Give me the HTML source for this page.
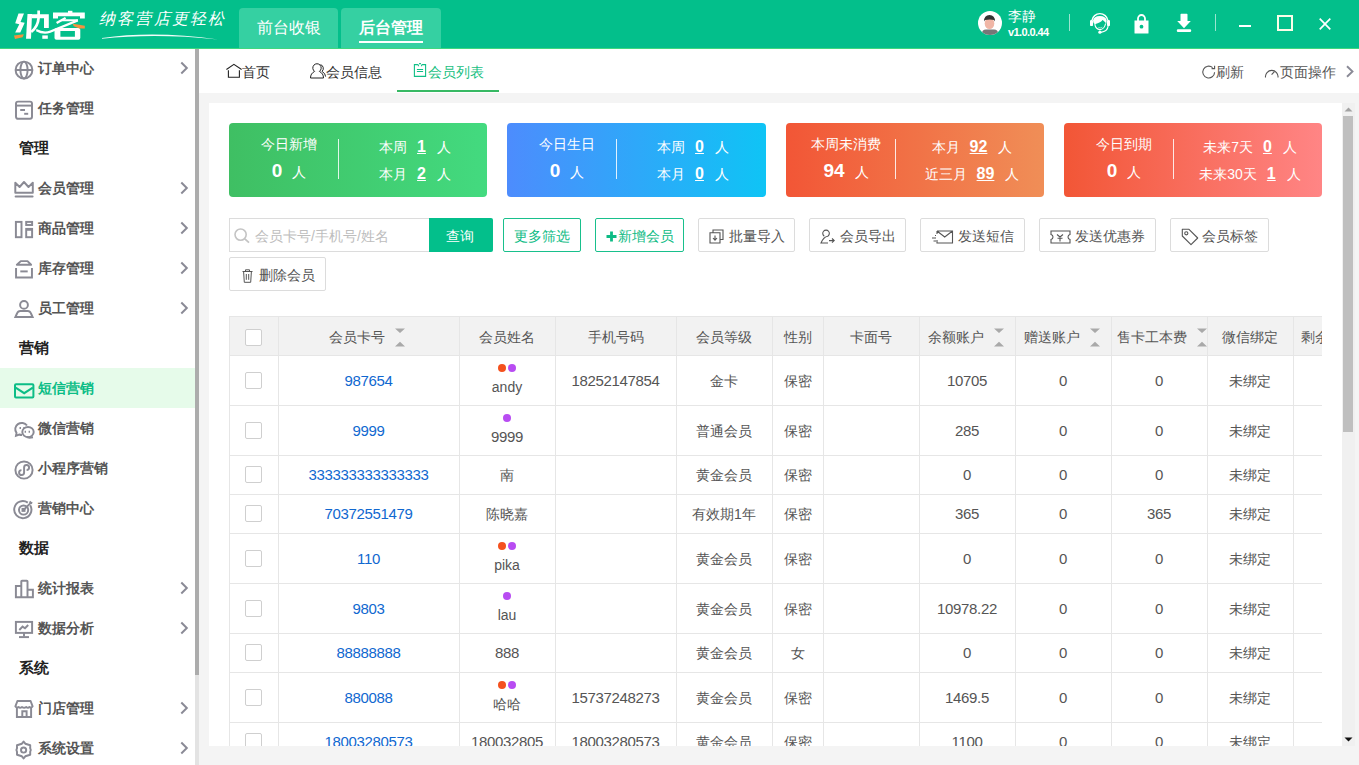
<!DOCTYPE html>
<html><head><meta charset="utf-8">
<style>
*{margin:0;padding:0;box-sizing:border-box}
html,body{width:1359px;height:765px;overflow:hidden;background:#f4f4f4;font-family:"Liberation Sans",sans-serif;}
.a{position:absolute;white-space:nowrap}
svg{position:absolute;overflow:visible}
#hdr{position:absolute;left:0;top:0;width:1359px;height:49px;background:#03bf8b;border-bottom:1px solid #3fd77f}
#hdr .tab{position:absolute;top:8px;height:40px;background:#35d0a2;border-radius:4px 4px 0 0;color:#fff;font-size:16px;text-align:center;line-height:40px}
#side{position:absolute;left:0;top:49px;width:195px;height:716px;background:#fff}
.si{position:absolute;left:0;width:195px;height:40px;color:#555;font-size:14px;font-weight:500}
.si .t{position:absolute;left:38px;top:0;line-height:40px}
.sh{position:absolute;left:19px;color:#222;font-size:15px;font-weight:bold;line-height:40px}
.ic path,.ic circle,.ic rect,.ic ellipse,.ic polyline,.ic line{fill:none;stroke:#8a8a94;stroke-width:1.95}
#main{position:absolute;left:199px;top:49px;width:1160px;height:716px;background:#f4f4f4}
#tabsbar{position:absolute;left:0;top:0;width:1160px;height:44px;background:#fff}
.card{border-radius:4px;color:#fff}
.card .cl{position:absolute;left:0;top:11px;width:120px;text-align:center;font-size:14px;line-height:20px}
.card .cb{position:absolute;left:0;top:36px;width:120px;height:24px;display:flex;justify-content:center;align-items:baseline}
.card .cb b{font-size:19px;line-height:24px;font-weight:bold}
.card .cb span{font-size:14px;line-height:24px;margin-left:10px}
.card .cd{position:absolute;left:109px;top:16px;width:1px;height:40px;background:rgba(255,255,255,.85)}
.card .cr{position:absolute;left:110px;width:152px;height:20px;display:flex;justify-content:center;align-items:baseline;font-size:14px;line-height:20px}
.card .cr u{font-weight:bold;font-size:16px;margin:0 11px 0 10px;text-decoration-thickness:1px;text-underline-offset:1px}
.btn{position:absolute;top:218px;height:34px;border:1px solid #dcdcdc;border-radius:2px;background:#fff;color:#555;font-size:14px;line-height:35px;text-align:center}
.btn.g{border-color:#18c08c;color:#0dbb84}
.th{height:22px;display:flex;justify-content:safe center;align-items:center;box-sizing:border-box;font-size:14px;line-height:22px;color:#555}
.th .srt{position:absolute}
.td{height:22px;text-align:center;font-size:14px;line-height:22px;color:#555}
.td.blue{color:#1068d0}
.td.num{font-size:15px;letter-spacing:-0.35px}
.dots{height:8px;display:flex;justify-content:center;gap:2px}
.dots i{display:block;width:8px;height:8px;border-radius:50%}
</style></head><body>
<!-- HEADER -->
<div id="hdr">
  <svg style="left:0;top:0" width="90" height="48" viewBox="0 0 90 48"><g fill="#fff">
<path d="M18.5 13.5 H24 L20.5 22 L24.7 22.8 L20.3 32.6 H15.2 L19.3 24.3 L15.2 23.3 Z"/>
<path d="M27.5 14 H32 L31 38.8 H26 Z"/>
<path d="M31.5 14.2 H48.8 V28 H44 V18.2 H31.5 Z"/>
<path d="M37.3 10.5 H40 V17.5 Q39.5 27 32 33 L30.5 31 Q36.5 26 37.3 17.5 Z"/>
<path d="M42.3 35.4 H47.8 V38.8 H42.3 Z"/>
<path d="M68 10.8 H72.4 V13.5 H68 Z"/>
<path d="M53 12.5 H84.8 V18.4 H80 V16.2 H58 V18.4 H53 Z"/>
<path d="M56 22 L65 17 L66.2 18.8 L57.2 24 Z"/>
<path d="M61.4 19.3 H78 L77.5 21.3 H60 Z"/>
<path d="M36.5 29 Q44 33 50 30.5 L77.5 19.3 L78.2 21.6 L50.5 32.8 Q43.5 35.5 36 31.2 Z"/>
<path fill-rule="evenodd" d="M56.5 27.9 H78.5 Q80.3 27.9 80.3 29.7 V38 Q80.3 39.8 78.5 39.8 H56.5 Q54.5 39.8 54.5 38 V29.7 Q54.5 27.9 56.5 27.9 Z M60.4 30.9 V36.8 H74.9 V30.9 Z"/>
</g>
<path d="M14 35.6 L23.8 34.3 L22.6 37.2 L15 38.9 Z" fill="#f5923e"/>
<path d="M72.6 23.8 L77.5 24.6 L84.8 25.8 L84.8 28.4 L79.5 28.4 L73.8 26.2 Z" fill="#f5923e"/>
</svg>
  <div class="a" style="left:99px;top:8px;font-size:16px;color:#fff;line-height:22px;letter-spacing:2.2px;font-weight:300;font-family:'Liberation Serif',serif;font-style:italic">纳客营店更轻松</div>
<svg style="left:100px;top:30px" width="120" height="12" viewBox="0 0 120 12"><path d="M2 8 Q55 0.5 118 9.5 Q55 3 2 8.8 Z" fill="#fff" opacity=".95"/></svg>
  <div class="tab" style="left:239px;width:99px;font-weight:500">前台收银</div>
  <div class="tab" style="left:341px;width:100px;font-weight:bold">后台管理<div style="position:absolute;left:18px;top:33px;width:64px;height:2px;background:#fff"></div></div>
  <!-- avatar -->
  <svg style="left:978px;top:11px" width="24" height="24" viewBox="0 0 24 24">
    <defs><clipPath id="cav"><circle cx="12" cy="12" r="12"/></clipPath></defs>
    <circle cx="12" cy="12" r="12" fill="#fff"/>
    <g clip-path="url(#cav)">
      <rect x="4" y="18.5" width="16" height="8" rx="4" fill="#777"/>
      <ellipse cx="11.5" cy="12.5" rx="4.8" ry="5.5" fill="#f0b6a6"/>
      <path d="M6 10.5 Q6 4 11.5 4 Q17 4 17 10.5 L16 9 Q12 8 7 9 Z" fill="#333"/>
    </g>
  </svg>
  <div class="a" style="left:1008px;top:7px;font-size:14px;color:#fff;line-height:18px">李静</div>
  <div class="a" style="left:1008px;top:25px;font-size:11px;font-weight:bold;color:#fff;line-height:14px;letter-spacing:-0.6px">v1.0.0.44</div>
  <div class="a" style="left:1069px;top:14px;width:1px;height:17px;background:rgba(255,255,255,.6)"></div>
  <!-- headset -->
  <svg style="left:1088px;top:10px" width="24" height="26" viewBox="0 0 24 26">
    <path d="M3.9 10.5 A8.1 8.1 0 0 1 19.9 10.5" fill="none" stroke="#fff" stroke-width="1.4"/>
    <rect x="2" y="9.9" width="3" height="6.2" rx="1.2" fill="#fff"/>
    <rect x="19" y="9.9" width="3" height="6.2" rx="1.2" fill="#fff"/>
    <path d="M5 10.5 Q5.8 6 11.9 6 Q17.8 6.2 18.7 10.5 L18.3 13.8 Q17 11.8 15.3 10.6 L14.4 10 Q13.2 12.5 6.8 14.2 Q5 12.8 5 10.5 Z" fill="#fff"/>
    <path d="M6.8 14.2 Q7.6 19.4 11.9 19.6 Q16.4 19.4 17.6 13.5" fill="none" stroke="#fff" stroke-width="1.1"/>
    <path d="M10.3 17.4 Q12.3 18.4 14.4 17.2" fill="none" stroke="#fff" stroke-width=".8" opacity=".7"/>
    <path d="M20.2 15.8 Q19.6 21.6 12.8 22.3" fill="none" stroke="#fff" stroke-width="1.2"/>
    <circle cx="11.9" cy="22.2" r="1.6" fill="#fff"/>
  </svg>
  <!-- lock -->
  <svg style="left:1134px;top:13px" width="15" height="21" viewBox="0 0 15 21">
    <path d="M4 8 V5.5 A3.5 3.5 0 0 1 11 5.5 V8" fill="none" stroke="#fff" stroke-width="1.8"/>
    <path fill="#fff" fill-rule="evenodd" d="M0.5 7.5 H14.5 V20 Q14.5 20.5 14 20.5 H1 Q0.5 20.5 0.5 20 Z M7.5 11.8 A1.9 1.9 0 1 0 7.5 15.6 A1.9 1.9 0 1 0 7.5 11.8 Z"/>
  </svg>
  <!-- download -->
  <svg style="left:1176px;top:13px" width="16" height="20" viewBox="0 0 16 20">
    <path fill="#fff" d="M4.5 1.5 Q4.5 0.8 5.2 0.8 H10.8 Q11.5 0.8 11.5 1.5 V8 H14.8 L8 15.2 L1.2 8 H4.5 Z"/>
    <rect x="0.8" y="16.3" width="14.4" height="2.6" rx="1.2" fill="#fff"/>
  </svg>
  <div class="a" style="left:1215px;top:14px;width:1px;height:17px;background:rgba(255,255,255,.6)"></div>
  <div class="a" style="left:1239px;top:25px;width:12px;height:2px;background:#fff"></div>
  <div class="a" style="left:1277px;top:15px;width:16px;height:16px;border:2px solid #fbfde8"></div>
  <svg style="left:1319px;top:18px" width="12" height="12" viewBox="0 0 12 12"><path d="M0.7 0.7 L11.3 11.3 M11.3 0.7 L0.7 11.3" stroke="#fff" stroke-width="1.7"/></svg>
</div>

<!-- SIDEBAR -->
<div id="side"></div>
<div class="a" style="left:38px;top:48px;line-height:40px;font-size:14px;color:#555;font-weight:bold">订单中心</div>
<svg class="ic" style="left:14px;top:59.5px" width="20" height="20" viewBox="0 0 20 20"><circle cx="10" cy="10" r="8.4"/><path d="M1.8 10 H18.2"/><ellipse cx="10" cy="10" rx="3.6" ry="8.4"/></svg>
<svg style="left:179px;top:61px" width="10" height="14" viewBox="0 0 10 14"><path d="M2.3 1.5 L7.8 7 L2.3 12.5" fill="none" stroke="#8a8a96" stroke-width="2"/></svg>
<div class="a" style="left:38px;top:88px;line-height:40px;font-size:14px;color:#555;font-weight:bold">任务管理</div>
<svg class="ic" style="left:14px;top:99.5px" width="20" height="20" viewBox="0 0 20 20"><rect x="2" y="1.6" width="16" height="17.2" rx="2"/><path d="M2 5.6 H18"/><path d="M6.2 10 H11" stroke-width="2.4"/><path d="M10.2 13.8 H14.2" stroke-width="2.4"/></svg>
<div class="sh a" style="top:128px">管理</div>
<div class="a" style="left:38px;top:168px;line-height:40px;font-size:14px;color:#555;font-weight:bold">会员管理</div>
<svg class="ic" style="left:14px;top:178px" width="20" height="20" viewBox="0 0 20 20"><path d="M1.3 4.8 L5.6 9 L10 4 L14.5 9 L18.8 4.8 V14.8 H1.3 Z" stroke-linejoin="round"/><path d="M1.6 18.4 H18.6" stroke-width="2.2" stroke-linecap="round"/></svg>
<svg style="left:179px;top:181px" width="10" height="14" viewBox="0 0 10 14"><path d="M2.3 1.5 L7.8 7 L2.3 12.5" fill="none" stroke="#8a8a96" stroke-width="2"/></svg>
<div class="a" style="left:38px;top:208px;line-height:40px;font-size:14px;color:#555;font-weight:bold">商品管理</div>
<svg class="ic" style="left:14px;top:218px" width="20" height="20" viewBox="0 0 20 20"><rect x="1.9" y="3.9" width="5.6" height="15.3"/><rect x="12.2" y="3.9" width="5.9" height="3.1"/><rect x="12.2" y="10.9" width="5.9" height="8.3"/><path d="M12.2 11.8 H18.1"/></svg>
<svg style="left:179px;top:221px" width="10" height="14" viewBox="0 0 10 14"><path d="M2.3 1.5 L7.8 7 L2.3 12.5" fill="none" stroke="#8a8a96" stroke-width="2"/></svg>
<div class="a" style="left:38px;top:248px;line-height:40px;font-size:14px;color:#555;font-weight:bold">库存管理</div>
<svg class="ic" style="left:14px;top:258px" width="20" height="20" viewBox="0 0 20 20"><path d="M6.8 3.1 H13.5 L17.1 6.8 H2.9 Z" stroke-width="2.3" stroke-linejoin="round"/><path d="M2.05 10.1 V19.5 H17.95 V10.1" stroke-width="1.9"/><path d="M6.3 13.4 H13.7" stroke-width="2.6"/></svg>
<svg style="left:179px;top:261px" width="10" height="14" viewBox="0 0 10 14"><path d="M2.3 1.5 L7.8 7 L2.3 12.5" fill="none" stroke="#8a8a96" stroke-width="2"/></svg>
<div class="a" style="left:38px;top:288px;line-height:40px;font-size:14px;color:#555;font-weight:bold">员工管理</div>
<svg class="ic" style="left:14px;top:298px" width="20" height="20" viewBox="0 0 20 20"><circle cx="10" cy="6.9" r="3.9"/><path d="M6.3 13 H13.8 Q16 13 17 15.5 L18.6 19 H1.4 L3 15.5 Q4 13 6.3 13 Z"/></svg>
<svg style="left:179px;top:301px" width="10" height="14" viewBox="0 0 10 14"><path d="M2.3 1.5 L7.8 7 L2.3 12.5" fill="none" stroke="#8a8a96" stroke-width="2"/></svg>
<div class="sh a" style="top:328px">营销</div>
<div class="a" style="left:0;top:368px;width:195px;height:40px;background:#e6fbea"></div>
<div class="a" style="left:38px;top:368px;line-height:40px;font-size:14px;color:#0cbd86;font-weight:bold">短信营销</div>
<svg class="ic" style="left:14px;top:379.5px" width="20" height="20" viewBox="0 0 20 20"><rect style="stroke:#0cbd86;stroke-width:2" x="1" y="4.3" width="18.4" height="13.1" rx="1"/><path style="stroke:#0cbd86;stroke-width:2" d="M1.6 7.6 L10.2 13.2 L18.8 7.6"/></svg>
<div class="a" style="left:38px;top:408px;line-height:40px;font-size:14px;color:#555;font-weight:bold">微信营销</div>
<svg class="ic" style="left:14px;top:419.5px" width="20" height="20" viewBox="0 0 20 20"><path d="M13 5.5 A6.3 6 0 1 0 2.5 12.8 L2 15.8 L5.2 14.5 Q6.5 15 8 15" stroke-width="1.5"/><ellipse cx="14" cy="12" rx="5.7" ry="5.1" stroke-width="1.5"/><path d="M12.6 17 L15.5 17.7 L19 17.2" stroke-width="1.5"/><path d="M5.5 7.9 H7 M9.3 7.9 H10.8 M10.6 11.8 H12 M14.6 11.8 H16" stroke-width="1.3"/></svg>
<div class="a" style="left:38px;top:448px;line-height:40px;font-size:14px;color:#555;font-weight:bold">小程序营销</div>
<svg class="ic" style="left:14px;top:459.5px" width="20" height="20" viewBox="0 0 20 20"><circle cx="10" cy="10" r="8.6"/><path d="M12.6 10 A2.5 2.5 0 1 0 10.1 7.4 V12.6 A2.5 2.5 0 1 1 7.5 10.1"/></svg>
<div class="a" style="left:38px;top:488px;line-height:40px;font-size:14px;color:#555;font-weight:bold">营销中心</div>
<svg class="ic" style="left:14px;top:499.5px" width="20" height="20" viewBox="0 0 20 20"><path d="M16.2 5.2 A8.6 8.6 0 1 1 13.8 2.6"/><circle cx="9.6" cy="10" r="4.6"/><path d="M9.6 10 L17 2.6 M15.5 1.6 L16.9 2.6 L18.2 3.3" stroke-width="1.8"/><rect x="8.5" y="8.9" width="2" height="2" fill="#8a8a94" stroke="none"/></svg>
<div class="sh a" style="top:528px">数据</div>
<div class="a" style="left:38px;top:568px;line-height:40px;font-size:14px;color:#555;font-weight:bold">统计报表</div>
<svg class="ic" style="left:14px;top:578px" width="20" height="20" viewBox="0 0 20 20"><path d="M1.9 19.2 V8 H7.3 V19.2 Z M7.3 19.2 V3.3 Q7.3 2.7 8 2.7 H12.8 Q13.5 2.7 13.5 3.3 V19.2 M13.5 11.8 H18.9 V19.2 H1.9"/></svg>
<svg style="left:179px;top:581px" width="10" height="14" viewBox="0 0 10 14"><path d="M2.3 1.5 L7.8 7 L2.3 12.5" fill="none" stroke="#8a8a96" stroke-width="2"/></svg>
<div class="a" style="left:38px;top:608px;line-height:40px;font-size:14px;color:#555;font-weight:bold">数据分析</div>
<svg class="ic" style="left:14px;top:618px" width="20" height="20" viewBox="0 0 20 20"><rect x="1.9" y="3.9" width="16.2" height="11"/><path d="M10 15 V18.5"/><path d="M5 19.1 H15"/><path d="M5.3 12 L8.6 8.6 L11 10.2 L14.2 7" stroke-width="1.6"/></svg>
<svg style="left:179px;top:621px" width="10" height="14" viewBox="0 0 10 14"><path d="M2.3 1.5 L7.8 7 L2.3 12.5" fill="none" stroke="#8a8a96" stroke-width="2"/></svg>
<div class="sh a" style="top:648px">系统</div>
<div class="a" style="left:38px;top:688px;line-height:40px;font-size:14px;color:#555;font-weight:bold">门店管理</div>
<svg class="ic" style="left:14px;top:698px" width="20" height="20" viewBox="0 0 20 20"><path d="M3.4 3 H16.6 L18.6 8.3 Q17.6 10.2 15.6 9 Q14 10.6 12.2 9 Q10.1 10.6 8 9 Q6 10.6 4.4 9 Q2.4 10.2 1.4 8.3 Z" stroke-linejoin="round"/><path d="M2.9 10 V19 H17.1 V10"/><path d="M8.3 19 V13.2 H12.6 V19"/></svg>
<svg style="left:179px;top:701px" width="10" height="14" viewBox="0 0 10 14"><path d="M2.3 1.5 L7.8 7 L2.3 12.5" fill="none" stroke="#8a8a96" stroke-width="2"/></svg>
<div class="a" style="left:38px;top:728px;line-height:40px;font-size:14px;color:#555;font-weight:bold">系统设置</div>
<svg class="ic" style="left:14px;top:740px" width="20" height="20" viewBox="0 0 20 20"><path d="M9.6 1.6 L11.3 3.7 L16.2 5.3 L16.2 8.3 L16.8 10 L16.2 11.7 L16.2 14.7 L11.3 16.3 L9.6 18.4 L7.9 16.3 L3 14.7 L3 11.7 L2.4 10 L3 8.3 L3 5.3 L7.9 3.7 Z" stroke-linejoin="round"/><circle cx="9.6" cy="10" r="2.6"/></svg>
<svg style="left:179px;top:741px" width="10" height="14" viewBox="0 0 10 14"><path d="M2.3 1.5 L7.8 7 L2.3 12.5" fill="none" stroke="#8a8a96" stroke-width="2"/></svg>

<div class="a" style="left:195px;top:49px;width:4px;height:716px;background:#e3e3e3"></div>
<div class="a" style="left:195px;top:49px;width:4px;height:626px;background:#acacac"></div>

<!-- MAIN -->
<div id="main">
  <div id="tabsbar"></div>
</div>
<!-- TABS BAR -->
<svg style="left:226px;top:64px" width="16" height="14" viewBox="0 0 16 14"><path d="M0.4 5.5 L7.9 0.3 L15.6 5.5 M2.4 6.2 V13.3 H13.4 V6.2" fill="none" stroke="#222" stroke-width="1.1"/></svg>
<div class="a" style="left:242px;top:61.5px;font-size:14px;line-height:20px;color:#333">首页</div>
<svg style="left:310px;top:63px" width="16" height="16" viewBox="0 0 16 16"><path d="M4.6 8.4 A4.2 4.2 0 1 1 9.4 8.4 M4.6 8.4 Q0.5 10.5 0.5 15 H13.5 Q13.5 10.5 9.4 8.4 M10.5 1.6 A4 4 0 0 1 12 8.4 Q15.5 10.3 15.6 13.6" fill="none" stroke="#222" stroke-width="1"/></svg>
<div class="a" style="left:326px;top:61.5px;font-size:14px;line-height:20px;color:#333">会员信息</div>
<svg style="left:413px;top:63px" width="14" height="14" viewBox="0 0 14 14"><path d="M4.6 1.6 H1.4 V13.4 H12.6 V1.6 H9.4 M4.6 1.6 Q5.4 1.6 5.6 3.2 M9.4 1.6 Q8.6 1.6 8.4 3.2 M6.1 0.6 H7.9" fill="none" stroke="#0fbf86" stroke-width="1.1"/><path d="M3.9 6.5 H10.1 M3.9 8.5 H10.1" stroke="#0fbf86" stroke-width="1.1"/></svg>
<div class="a" style="left:428px;top:61.5px;font-size:14px;line-height:20px;color:#19bf82">会员列表</div>
<div class="a" style="left:397px;top:90px;width:102px;height:2px;background:#37b964"></div>
<svg style="left:1202px;top:65px" width="14" height="14" viewBox="0 0 14 14"><path d="M12.6 7.2 A5.9 5.9 0 1 1 10.6 2.6" fill="none" stroke="#555" stroke-width="1.1"/><path d="M12.6 0.8 V3.6 H9.6" fill="none" stroke="#555" stroke-width="1.1"/></svg>
<div class="a" style="left:1216px;top:62px;font-size:14px;line-height:20px;color:#555">刷新</div>
<svg style="left:1264px;top:65px" width="16" height="14" viewBox="0 0 16 14"><path d="M1.5 12.5 A6.3 6.3 0 1 1 14 12.5" fill="none" stroke="#555" stroke-width="1.1"/><path d="M7.6 9.6 L10.4 6.6" stroke="#555" stroke-width="1.1"/></svg>
<div class="a" style="left:1279.5px;top:62px;font-size:14px;line-height:20px;color:#555">页面操作</div>
<svg style="left:1345px;top:65px" width="10" height="13" viewBox="0 0 10 13"><path d="M2 1.2 L7.5 6.5 L2 11.8" fill="none" stroke="#8a8a96" stroke-width="1.9"/></svg>
<div id="card" class="a" style="left:209px;top:103px;width:1133px;height:643px;background:#fff;overflow:hidden"></div>
<!-- CARDS -->
<div class="a card" style="left:229px;top:123px;width:258px;height:74px;background:linear-gradient(90deg,#3fbf63,#43da7f)">
<div class="cl">今日新增</div>
<div class="cb"><b>0</b><span>人</span></div>
<div class="cd"></div>
<div class="cr" style="top:14px"><span>本周</span><u>1</u><span>人</span></div>
<div class="cr" style="top:40.5px"><span>本月</span><u>2</u><span>人</span></div>
</div>
<div class="a card" style="left:507px;top:123px;width:259px;height:74px;background:linear-gradient(90deg,#4d8cfd,#0fc4f5)">
<div class="cl">今日生日</div>
<div class="cb"><b>0</b><span>人</span></div>
<div class="cd"></div>
<div class="cr" style="top:14px"><span>本周</span><u>0</u><span>人</span></div>
<div class="cr" style="top:40.5px"><span>本月</span><u>0</u><span>人</span></div>
</div>
<div class="a card" style="left:786px;top:123px;width:258px;height:74px;background:linear-gradient(90deg,#f25636,#f08e57)">
<div class="cl">本周未消费</div>
<div class="cb"><b>94</b><span>人</span></div>
<div class="cd"></div>
<div class="cr" style="top:14px"><span>本月</span><u>92</u><span>人</span></div>
<div class="cr" style="top:40.5px"><span>近三月</span><u>89</u><span>人</span></div>
</div>
<div class="a card" style="left:1064px;top:123px;width:258px;height:74px;background:linear-gradient(90deg,#f25636,#ff8585)">
<div class="cl">今日到期</div>
<div class="cb"><b>0</b><span>人</span></div>
<div class="cd"></div>
<div class="cr" style="top:14px"><span>未来7天</span><u>0</u><span>人</span></div>
<div class="cr" style="top:40.5px"><span>未来30天</span><u>1</u><span>人</span></div>
</div>
<!-- TOOLBAR -->
<div class="a" style="left:229px;top:218px;width:201px;height:34px;border:1px solid #dcdcdc;border-right:none;background:#fff"></div>
<svg style="left:234px;top:228px" width="16" height="15" viewBox="0 0 16 15"><circle cx="6.6" cy="6.6" r="5.6" fill="none" stroke="#c4c4c4" stroke-width="1.6"/><path d="M10.8 10.8 L15 14.6" stroke="#c4c4c4" stroke-width="1.8"/></svg>
<div class="a" style="left:255px;top:225.5px;font-size:14px;line-height:20px;color:#bdbdbd">会员卡号/手机号/姓名</div>
<div class="a" style="left:429px;top:218px;width:64px;height:34px;background:#03bf8b;border-radius:0 2px 2px 0"></div>
<div class="a" style="left:446px;top:225.5px;font-size:14px;line-height:20px;color:#fff">查询</div>
<div class="btn g" style="left:503px;width:78px">更多筛选</div>
<div class="btn g" style="left:595px;width:89px"><svg style="left:10px;top:11.5px" width="11" height="11" viewBox="0 0 11 11"><path d="M5.5 0.5 V10.5 M0.5 5.5 H10.5" stroke="#0dbb84" stroke-width="2.8"/></svg><span style="position:absolute;left:21.5px">新增会员</span></div>
<div class="btn" style="left:698px;width:97px;padding-left:12px"><svg style="left:10px;top:10px" width="15" height="15" viewBox="0 0 15 15"><path d="M4 3.5 V1 H14 V10.5 H11.5 M1 3.8 H11 V14 H1 Z M6 6.5 V11 M4 9 L6 11.2 L8 9" fill="none" stroke="#555" stroke-width="1.1"/></svg><span style="position:absolute;left:30px">批量导入</span></div>
<div class="btn" style="left:809px;width:97px"><svg style="left:10px;top:10px" width="15" height="15" viewBox="0 0 15 15"><path d="M4.3 7.2 A3.3 3.3 0 1 1 7.8 7.2 Q3.5 7.8 1 14 H8 M9 11.6 H14 M12 9.5 L14.2 11.6 L12 13.7" fill="none" stroke="#555" stroke-width="1.1"/></svg><span style="position:absolute;left:30px">会员导出</span></div>
<div class="btn" style="left:920px;width:105px"><svg style="left:10px;top:11px" width="23" height="14" viewBox="0 0 23 14"><path d="M6 1 H21.5 V13 H6 V10 M6 1 L13.7 7 L21.5 1 M6 1 V4 M1 8 H5 M2.5 11 H5 M4 5.5 H5" fill="none" stroke="#555" stroke-width="1.1"/></svg><span style="position:absolute;left:37px">发送短信</span></div>
<div class="btn" style="left:1039px;width:117px"><svg style="left:10px;top:11px" width="21" height="14" viewBox="0 0 21 14"><path d="M1 1 H20 V4.5 Q18 5 18 7 Q18 9 20 9.5 V13 H1 V9.5 Q3 9 3 7 Q3 5 1 4.5 Z M7 4.5 L10 7 L13 4.5 M10 7 V11.5 M7.5 8.2 H12.5" fill="none" stroke="#555" stroke-width="1.1"/></svg><span style="position:absolute;left:35px">发送优惠券</span></div>
<div class="btn" style="left:1170px;width:99px"><svg style="left:10px;top:9px" width="18" height="18" viewBox="0 0 18 18"><path d="M1.3 1.3 H8 L16.7 10 L10 16.7 L1.3 8 Z" fill="none" stroke="#555" stroke-width="1.1" stroke-linejoin="round"/><circle cx="5.3" cy="5.3" r="1.6" fill="none" stroke="#555" stroke-width="1.1"/></svg><span style="position:absolute;left:31px">会员标签</span></div>
<div class="btn" style="left:229px;top:257px;width:97px;height:34px"><svg style="left:12px;top:11px" width="11" height="14" viewBox="0 0 11 14"><path d="M0.5 2.5 H10.5 M3.5 2.5 V0.8 H7.5 V2.5 M1.6 2.5 L2.3 13.3 H8.7 L9.4 2.5 M4.3 5 V10.8 M6.7 5 V10.8" fill="none" stroke="#555" stroke-width="1"/></svg><span style="position:absolute;left:29px">删除会员</span></div>

<div class="a" style="left:229px;top:316px;width:1093px;height:430px;overflow:hidden">
<div class="a" style="left:0;top:0;width:1100px;height:39px;background:#f2f2f2"></div>
<div class="a" style="left:0;top:0px;width:1100px;height:1px;background:#e6e6e6"></div>
<div class="a" style="left:0;top:39px;width:1100px;height:1px;background:#e6e6e6"></div>
<div class="a" style="left:0;top:89px;width:1100px;height:1px;background:#e6e6e6"></div>
<div class="a" style="left:0;top:139px;width:1100px;height:1px;background:#e6e6e6"></div>
<div class="a" style="left:0;top:178px;width:1100px;height:1px;background:#e6e6e6"></div>
<div class="a" style="left:0;top:217px;width:1100px;height:1px;background:#e6e6e6"></div>
<div class="a" style="left:0;top:267px;width:1100px;height:1px;background:#e6e6e6"></div>
<div class="a" style="left:0;top:317px;width:1100px;height:1px;background:#e6e6e6"></div>
<div class="a" style="left:0;top:356px;width:1100px;height:1px;background:#e6e6e6"></div>
<div class="a" style="left:0;top:406px;width:1100px;height:1px;background:#e6e6e6"></div>
<div class="a" style="left:0;top:445px;width:1100px;height:1px;background:#e6e6e6"></div>
<div class="a" style="left:0px;top:0;width:1px;height:500px;background:#e6e6e6"></div>
<div class="a" style="left:49px;top:0;width:1px;height:500px;background:#e6e6e6"></div>
<div class="a" style="left:230px;top:0;width:1px;height:500px;background:#e6e6e6"></div>
<div class="a" style="left:326px;top:0;width:1px;height:500px;background:#e6e6e6"></div>
<div class="a" style="left:447px;top:0;width:1px;height:500px;background:#e6e6e6"></div>
<div class="a" style="left:543px;top:0;width:1px;height:500px;background:#e6e6e6"></div>
<div class="a" style="left:594px;top:0;width:1px;height:500px;background:#e6e6e6"></div>
<div class="a" style="left:690px;top:0;width:1px;height:500px;background:#e6e6e6"></div>
<div class="a" style="left:786px;top:0;width:1px;height:500px;background:#e6e6e6"></div>
<div class="a" style="left:882px;top:0;width:1px;height:500px;background:#e6e6e6"></div>
<div class="a" style="left:978px;top:0;width:1px;height:500px;background:#e6e6e6"></div>
<div class="a" style="left:1064px;top:0;width:1px;height:500px;background:#e6e6e6"></div>
<div class="a" style="left:1135px;top:0;width:1px;height:500px;background:#e6e6e6"></div>
<div class="a" style="left:1231px;top:0;width:1px;height:500px;background:#e6e6e6"></div>
<div class="a" style="left:16px;top:12.5px;width:17px;height:17px;border:1px solid #cfcfcf;border-radius:2px;background:#fff"></div>
<div class="a th" style="left:49px;width:181px;top:10px;padding:0 29px 0 6px"><span style="position:relative">会员卡号<svg class="srt" style="left:calc(100% + 10px);top:2px" width="10" height="19" viewBox="0 0 10 19"><path d="M0 0.5 H10 L5 5 Z M0 18.5 H10 L5 13.8 Z" fill="#a9a9a9"/></svg></span></div>
<div class="a th" style="left:230px;width:96px;top:10px"><span>会员姓名</span></div>
<div class="a th" style="left:326px;width:121px;top:10px"><span>手机号码</span></div>
<div class="a th" style="left:447px;width:96px;top:10px"><span>会员等级</span></div>
<div class="a th" style="left:543px;width:51px;top:10px"><span>性别</span></div>
<div class="a th" style="left:594px;width:96px;top:10px"><span>卡面号</span></div>
<div class="a th" style="left:690px;width:96px;top:10px;padding:0 29px 0 6px"><span style="position:relative">余额账户<svg class="srt" style="left:calc(100% + 10px);top:2px" width="10" height="19" viewBox="0 0 10 19"><path d="M0 0.5 H10 L5 5 Z M0 18.5 H10 L5 13.8 Z" fill="#a9a9a9"/></svg></span></div>
<div class="a th" style="left:786px;width:96px;top:10px;padding:0 29px 0 6px"><span style="position:relative">赠送账户<svg class="srt" style="left:calc(100% + 10px);top:2px" width="10" height="19" viewBox="0 0 10 19"><path d="M0 0.5 H10 L5 5 Z M0 18.5 H10 L5 13.8 Z" fill="#a9a9a9"/></svg></span></div>
<div class="a th" style="left:882px;width:96px;top:10px;padding:0 29px 0 6px"><span style="position:relative">售卡工本费<svg class="srt" style="left:calc(100% + 10px);top:2px" width="10" height="19" viewBox="0 0 10 19"><path d="M0 0.5 H10 L5 5 Z M0 18.5 H10 L5 13.8 Z" fill="#a9a9a9"/></svg></span></div>
<div class="a th" style="left:978px;width:86px;top:10px"><span>微信绑定</span></div>
<div class="a th" style="left:1064px;width:71px;top:10px"><span>剩余积分</span></div>
<div class="a" style="left:16px;top:55.5px;width:17px;height:17px;border:1px solid #cfcfcf;border-radius:2px;background:#fff"></div>
<div class="a td blue num" style="left:49px;width:181px;top:53.5px">987654</div>
<div class="a dots" style="left:230px;width:96px;top:48px"><i style="background:#f4511e"></i><i style="background:#b84cf2"></i></div>
<div class="a td" style="left:230px;width:96px;top:60px">andy</div>
<div class="a td num" style="left:326px;width:121px;top:53.5px">18252147854</div>
<div class="a td" style="left:447px;width:96px;top:53.5px">金卡</div>
<div class="a td" style="left:543px;width:51px;top:53.5px">保密</div>
<div class="a td num" style="left:690px;width:96px;top:53.5px">10705</div>
<div class="a td num" style="left:786px;width:96px;top:53.5px">0</div>
<div class="a td num" style="left:882px;width:96px;top:53.5px">0</div>
<div class="a td" style="left:978px;width:86px;top:53.5px">未绑定</div>
<div class="a" style="left:16px;top:105.5px;width:17px;height:17px;border:1px solid #cfcfcf;border-radius:2px;background:#fff"></div>
<div class="a td blue num" style="left:49px;width:181px;top:103.5px">9999</div>
<div class="a dots" style="left:230px;width:96px;top:98px"><i style="background:#b84cf2"></i></div>
<div class="a td num" style="left:230px;width:96px;top:110px">9999</div>
<div class="a td" style="left:447px;width:96px;top:103.5px">普通会员</div>
<div class="a td" style="left:543px;width:51px;top:103.5px">保密</div>
<div class="a td num" style="left:690px;width:96px;top:103.5px">285</div>
<div class="a td num" style="left:786px;width:96px;top:103.5px">0</div>
<div class="a td num" style="left:882px;width:96px;top:103.5px">0</div>
<div class="a td" style="left:978px;width:86px;top:103.5px">未绑定</div>
<div class="a" style="left:16px;top:150.0px;width:17px;height:17px;border:1px solid #cfcfcf;border-radius:2px;background:#fff"></div>
<div class="a td blue num" style="left:49px;width:181px;top:148.0px">333333333333333</div>
<div class="a td" style="left:230px;width:96px;top:148.0px">南</div>
<div class="a td" style="left:447px;width:96px;top:148.0px">黄金会员</div>
<div class="a td" style="left:543px;width:51px;top:148.0px">保密</div>
<div class="a td num" style="left:690px;width:96px;top:148.0px">0</div>
<div class="a td num" style="left:786px;width:96px;top:148.0px">0</div>
<div class="a td num" style="left:882px;width:96px;top:148.0px">0</div>
<div class="a td" style="left:978px;width:86px;top:148.0px">未绑定</div>
<div class="a" style="left:16px;top:189.0px;width:17px;height:17px;border:1px solid #cfcfcf;border-radius:2px;background:#fff"></div>
<div class="a td blue num" style="left:49px;width:181px;top:187.0px">70372551479</div>
<div class="a td" style="left:230px;width:96px;top:187.0px">陈晓嘉</div>
<div class="a td" style="left:447px;width:96px;top:187.0px">有效期1年</div>
<div class="a td" style="left:543px;width:51px;top:187.0px">保密</div>
<div class="a td num" style="left:690px;width:96px;top:187.0px">365</div>
<div class="a td num" style="left:786px;width:96px;top:187.0px">0</div>
<div class="a td num" style="left:882px;width:96px;top:187.0px">365</div>
<div class="a td" style="left:978px;width:86px;top:187.0px">未绑定</div>
<div class="a" style="left:16px;top:233.5px;width:17px;height:17px;border:1px solid #cfcfcf;border-radius:2px;background:#fff"></div>
<div class="a td blue num" style="left:49px;width:181px;top:231.5px">110</div>
<div class="a dots" style="left:230px;width:96px;top:226px"><i style="background:#f4511e"></i><i style="background:#b84cf2"></i></div>
<div class="a td" style="left:230px;width:96px;top:238px">pika</div>
<div class="a td" style="left:447px;width:96px;top:231.5px">黄金会员</div>
<div class="a td" style="left:543px;width:51px;top:231.5px">保密</div>
<div class="a td num" style="left:690px;width:96px;top:231.5px">0</div>
<div class="a td num" style="left:786px;width:96px;top:231.5px">0</div>
<div class="a td num" style="left:882px;width:96px;top:231.5px">0</div>
<div class="a td" style="left:978px;width:86px;top:231.5px">未绑定</div>
<div class="a" style="left:16px;top:283.5px;width:17px;height:17px;border:1px solid #cfcfcf;border-radius:2px;background:#fff"></div>
<div class="a td blue num" style="left:49px;width:181px;top:281.5px">9803</div>
<div class="a dots" style="left:230px;width:96px;top:276px"><i style="background:#b84cf2"></i></div>
<div class="a td" style="left:230px;width:96px;top:288px">lau</div>
<div class="a td" style="left:447px;width:96px;top:281.5px">黄金会员</div>
<div class="a td" style="left:543px;width:51px;top:281.5px">保密</div>
<div class="a td num" style="left:690px;width:96px;top:281.5px">10978.22</div>
<div class="a td num" style="left:786px;width:96px;top:281.5px">0</div>
<div class="a td num" style="left:882px;width:96px;top:281.5px">0</div>
<div class="a td" style="left:978px;width:86px;top:281.5px">未绑定</div>
<div class="a" style="left:16px;top:328.0px;width:17px;height:17px;border:1px solid #cfcfcf;border-radius:2px;background:#fff"></div>
<div class="a td blue num" style="left:49px;width:181px;top:326.0px">88888888</div>
<div class="a td num" style="left:230px;width:96px;top:326.0px">888</div>
<div class="a td" style="left:447px;width:96px;top:326.0px">黄金会员</div>
<div class="a td" style="left:543px;width:51px;top:326.0px">女</div>
<div class="a td num" style="left:690px;width:96px;top:326.0px">0</div>
<div class="a td num" style="left:786px;width:96px;top:326.0px">0</div>
<div class="a td num" style="left:882px;width:96px;top:326.0px">0</div>
<div class="a td" style="left:978px;width:86px;top:326.0px">未绑定</div>
<div class="a" style="left:16px;top:372.5px;width:17px;height:17px;border:1px solid #cfcfcf;border-radius:2px;background:#fff"></div>
<div class="a td blue num" style="left:49px;width:181px;top:370.5px">880088</div>
<div class="a dots" style="left:230px;width:96px;top:365px"><i style="background:#f4511e"></i><i style="background:#b84cf2"></i></div>
<div class="a td" style="left:230px;width:96px;top:377px">哈哈</div>
<div class="a td num" style="left:326px;width:121px;top:370.5px">15737248273</div>
<div class="a td" style="left:447px;width:96px;top:370.5px">黄金会员</div>
<div class="a td" style="left:543px;width:51px;top:370.5px">保密</div>
<div class="a td num" style="left:690px;width:96px;top:370.5px">1469.5</div>
<div class="a td num" style="left:786px;width:96px;top:370.5px">0</div>
<div class="a td num" style="left:882px;width:96px;top:370.5px">0</div>
<div class="a td" style="left:978px;width:86px;top:370.5px">未绑定</div>
<div class="a" style="left:16px;top:417.0px;width:17px;height:17px;border:1px solid #cfcfcf;border-radius:2px;background:#fff"></div>
<div class="a td blue num" style="left:49px;width:181px;top:415.0px">18003280573</div>
<div class="a td num" style="left:230px;width:96px;top:415.0px">180032805</div>
<div class="a td num" style="left:326px;width:121px;top:415.0px">18003280573</div>
<div class="a td" style="left:447px;width:96px;top:415.0px">黄金会员</div>
<div class="a td" style="left:543px;width:51px;top:415.0px">保密</div>
<div class="a td num" style="left:690px;width:96px;top:415.0px">1100</div>
<div class="a td num" style="left:786px;width:96px;top:415.0px">0</div>
<div class="a td num" style="left:882px;width:96px;top:415.0px">0</div>
<div class="a td" style="left:978px;width:86px;top:415.0px">未绑定</div>
</div>

<!-- right scrollbar -->
<div class="a" style="left:1342px;top:103px;width:13px;height:643px;background:#f0f0f0"></div>
<div class="a" style="left:1343px;top:116px;width:10px;height:316px;background:#bfbfbf"></div>
<svg style="left:1342px;top:103px" width="13" height="13" viewBox="0 0 13 13"><path d="M2.5 8.5 L6.5 4.5 L10.5 8.5 Z" fill="#a3a3a3"/></svg>
<svg style="left:1342px;top:733px" width="13" height="13" viewBox="0 0 13 13"><path d="M2.5 4.5 L6.5 8.5 L10.5 4.5 Z" fill="#111"/></svg>
</body></html>
